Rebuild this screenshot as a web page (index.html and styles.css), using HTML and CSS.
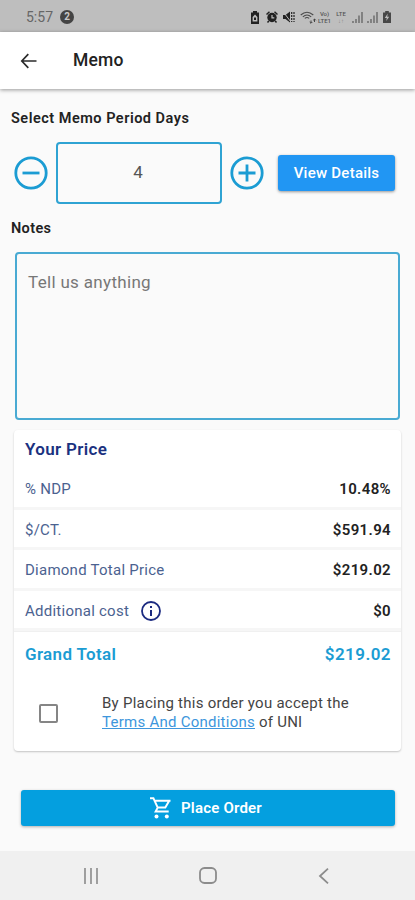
FILE: index.html
```html
<!DOCTYPE html>
<html lang="en">
<head>
    <meta charset="UTF-8">
    <meta name="viewport" content="width=device-width, initial-scale=1.0">
    <title>Memo</title>
    <link rel="stylesheet" href="styles.css">
</head>
<body>
    <div class="status-bar">
        <span class="time">5:57</span>
        <span class="badge">2</span>
        <div class="status-icons">
            <svg class="battery-saver" width="10" height="13" viewBox="0 0 10 13">
                <path d="M3 0h4v1.5h2V13H1V1.5h2z" fill="#222"/>
                <path d="M5 3.5L2.6 6v4.5h4.8V6z" fill="#bebebe"/>
                <path d="M4 6.5h2V9H4z" fill="#222"/>
            </svg>
            <svg class="alarm" width="12" height="12" viewBox="0 0 12 12">
                <circle cx="6" cy="6.5" r="4.7" fill="#222"/>
                <path d="M.5 3.5l3-2.7M11.5 3.5l-3-2.7M2.8 10l-1.3 1.5M9.2 10l1.3 1.5" stroke="#222" stroke-width="1.5"/>
                <path d="M6 4v2.8h2.3" fill="none" stroke="#bebebe" stroke-width="1.2"/>
            </svg>
            <svg class="mute" width="12" height="12" viewBox="0 0 12 12">
                <path d="M0 4h2.5L7 .5v11L2.5 8H0z" fill="#222"/>
                <path d="M.5 1.2L8 11" stroke="#bebebe" stroke-width="1"/>
                <path d="M8.7 1v10M11 1v10" stroke="#222" stroke-width="1.2" stroke-dasharray="2 1"/>
            </svg>
            <svg class="wifi" width="17" height="13" viewBox="0 0 17 13">
                <path d="M.7 4Q7 -1.5 13.3 4M2.8 5.8Q7 2.2 11.2 5.8M4.8 7.4Q7 5.5 9.2 7.4" fill="none" stroke="#4a4a4a" stroke-width="1.1"/>
                <path d="M11 12V9.5M9.7 11L11 12.3 12.3 11M14.5 8v3M13.2 9.3l1.3-1.3 1.3 1.3" fill="none" stroke="#444" stroke-width="1"/>
            </svg>
            <span class="lte"><span>Vo)</span><span>LTE1</span></span>
            <span class="lte lte-2"><span>LTE</span><span class="arrows">↓↑</span></span>
            <svg class="signal" width="27" height="12" viewBox="0 0 27 12">
                <path d="M1 12v-2M4 12V8M7 12V4.5M10 12V1M16 12v-2M19 12V8M22 12V4.5M25 12V1" stroke="#686868" stroke-width="1.4"/>
            </svg>
            <svg class="battery" width="8" height="12" viewBox="0 0 8 12">
                <path d="M2.2 0h3.6v1.5H8V12H0V1.5h2.2z" fill="#484848"/>
                <path d="M4.8 2.5L1.8 7h2L3.2 10 6.2 5.7h-2z" fill="#bebebe"/>
            </svg>
        </div>
    </div>

    <header class="app-bar">
        <svg class="back" width="18" height="16" viewBox="0 0 18 16">
            <path d="M16.5 8H2M8.3 1.2L1.8 8l6.5 6.8" fill="none" stroke="#2b2b2b" stroke-width="1.7"/>
        </svg>
        <h1>Memo</h1>
    </header>

    <main>
        <h2 class="label">Select Memo Period Days</h2>
        <div class="days">
            <button class="round" type="button" aria-label="Less">
                <svg width="34" height="34" viewBox="0 0 34 34">
                    <circle cx="17" cy="17" r="15.2"/>
                    <path d="M8.5 17h17"/>
                </svg>
            </button>
            <input class="days-input" type="text" value="4">
            <button class="round" type="button" aria-label="More">
                <svg width="34" height="34" viewBox="0 0 34 34">
                    <circle cx="17" cy="17" r="15.2"/>
                    <path d="M8.5 17h17M17 8.5v17"/>
                </svg>
            </button>
            <button class="details" type="button">View Details</button>
        </div>

        <h2 class="label notes-label">Notes</h2>
        <textarea class="notes" placeholder="Tell us anything"></textarea>

        <section class="card">
            <h3>Your Price</h3>
            <div class="row first"><span>% NDP</span><b>10.48%</b></div>
            <div class="row"><span>$/CT.</span><b>$591.94</b></div>
            <div class="row"><span>Diamond Total Price</span><b>$219.02</b></div>
            <div class="row">
                <span>Additional cost</span>
                <svg class="info" width="20" height="20" viewBox="0 0 20 20">
                    <circle cx="10" cy="10" r="9" fill="none" stroke="#1b2a80" stroke-width="1.8"/>
                    <path d="M10 9v6M10 5v2" stroke="#1b2a80" stroke-width="2"/>
                </svg>
                <b>$0</b>
            </div>
            <div class="total"><span>Grand Total</span><span class="amount">$219.02</span></div>
            <div class="terms">
                <input class="check" type="checkbox" aria-label="Accept">
                <p>By Placing this order you accept the<br><a href="#">Terms And Conditions</a> of UNI</p>
            </div>
        </section>

        <button class="place-order" type="button">
            <svg width="22" height="22" viewBox="0 0 22 22">
                <path d="M0 1.2h3.4l4.3 9.4h7.6l4.2-7.4M4.2 3.7h16.3M7.7 10.6l-2 3.8h13" fill="none" stroke="#fff" stroke-width="2"/>
                <circle cx="6.5" cy="19.5" r="2" fill="#fff"/>
                <circle cx="16.8" cy="19.5" r="2" fill="#fff"/>
            </svg>
            <span>Place Order</span>
        </button>
    </main>

    <nav class="nav-bar">
        <svg width="18" height="16" viewBox="0 0 18 16">
            <path d="M3 0v16M9 0v16M15 0v16" stroke="#969696" stroke-width="1.8"/>
        </svg>
        <svg width="18" height="17" viewBox="0 0 18 17">
            <rect x="1" y="1" width="16" height="15" rx="4.5" fill="none" stroke="#8c8c8c" stroke-width="1.8"/>
        </svg>
        <svg width="18" height="16" viewBox="0 0 18 16">
            <path d="M13 .7L5 8l8 7.3" fill="none" stroke="#8c8c8c" stroke-width="1.8"/>
        </svg>
    </nav>
</body>
</html>
```
FILE: styles.css
```css
* {
    box-sizing: border-box;
}
body {
    margin: 0;
    height: 900px;
    display: flex;
    flex-direction: column;
    background-color: #fafafa;
    font-family: Roboto, sans-serif;
    color: #222;
    overflow: hidden;
}
h1, h2, h3, p {
    margin: 0;
}
button, input, textarea {
    font-family: inherit;
}
svg {
    display: block;
    flex: none;
}
.status-bar {
    height: 32px;
    flex: none;
    display: flex;
    align-items: center;
    padding: 2px 24px 0 26px;
    background-color: #bebebe;
}
.time {
    width: 28px;
    font-size: 14px;
    color: #666;
}
.badge {
    width: 14px;
    height: 14px;
    margin-left: 6px;
    border-radius: 50%;
    background-color: #444;
    color: #c8c8c8;
    font-size: 10px;
    font-weight: 700;
    line-height: 14px;
    text-align: center;
}
.status-icons {
    display: flex;
    align-items: center;
    margin-left: auto;
}
.alarm {
    margin-left: 6px;
}
.mute {
    margin-left: 5px;
}
.wifi {
    margin-left: 5px;
}
.lte {
    display: flex;
    flex-direction: column;
    align-items: center;
    width: 15px;
    font-size: 6px;
    line-height: 7px;
    font-weight: 500;
    color: #555;
}
.lte-2 {
    width: 12px;
    margin-left: 3px;
}
.arrows {
    color: #8a8a8a;
}
.signal {
    margin-left: 5px;
}
.battery {
    margin-left: 4px;
}
.app-bar {
    height: 57px;
    flex: none;
    display: flex;
    align-items: center;
    padding-left: 20px;
    background-color: #fff;
    box-shadow: 0 1px 4px rgba(0, 0, 0, 0.4);
}
.app-bar h1 {
    margin-left: 35px;
    font-size: 17.5px;
    line-height: 22px;
    padding-bottom: 1px;
    font-weight: 500;
    letter-spacing: 0.2px;
}
main {
    flex: 1;
    display: flex;
    flex-direction: column;
}
.label {
    margin: 20px 0 0 11px;
    font-size: 14.5px;
    line-height: 20px;
    font-weight: 600;
    letter-spacing: 0.5px;
}
.days {
    display: flex;
    align-items: center;
    margin-top: 13px;
    padding-left: 14px;
}
.round {
    padding: 0;
    border: none;
    background: none;
}
.round svg {
    fill: none;
    stroke: #1b9cd3;
    stroke-width: 2.8;
}
.days-input {
    width: 166px;
    height: 62px;
    margin: 0 8px;
    padding: 0 2px 3px 0;
    border: 2px solid #2fa3d3;
    border-radius: 4px;
    background: none;
    font-size: 17px;
    text-align: center;
    color: #555;
}
.details {
    width: 117px;
    height: 36px;
    margin-left: 14px;
    padding: 0;
    border: none;
    border-radius: 3px;
    background-color: #2196f3;
    box-shadow: 0 1px 3px rgba(0, 0, 0, 0.4);
    color: #fff;
    font-size: 15px;
    font-weight: 500;
    letter-spacing: 0.25px;
}
.notes-label {
    margin-top: 15px;
    letter-spacing: 0.35px;
}
.notes {
    width: 385px;
    height: 168px;
    flex: none;
    margin: 13px 0 0 15px;
    padding: 18px 11px;
    border: 2px solid #49aad3;
    border-radius: 4px;
    background: none;
    font-size: 17px;
    line-height: 20px;
    letter-spacing: 0.32px;
    resize: none;
}
.notes::placeholder {
    color: #777;
}
.card {
    height: 321px;
    flex: none;
    margin: 10px 14px 0;
    border-radius: 4px;
    background-color: #fff;
    box-shadow: 0 1px 2px rgba(0, 0, 0, 0.22);
}
.card h3 {
    padding: 8px 11px 0;
    font-size: 17px;
    line-height: 22px;
    font-weight: 600;
    letter-spacing: 0.35px;
    color: #1b3280;
}
.row {
    height: 40.5px;
    display: flex;
    align-items: center;
    padding: 3px 10px 0 11px;
    border-bottom: 3px solid #f6f6f6;
    font-size: 15px;
    letter-spacing: 0.25px;
    color: #4b6290;
}
.row.first {
    margin-top: 9px;
}
.row b {
    margin-left: auto;
    font-weight: 600;
    letter-spacing: 0.35px;
    color: #222;
}
.info {
    margin-left: 12px;
}
.total {
    height: 44px;
    display: flex;
    align-items: center;
    justify-content: space-between;
    padding: 0 10px 0 11px;
    border-top: 1px solid #f0f0f0;
    font-size: 17px;
    font-weight: 600;
    letter-spacing: 0.35px;
    color: #1b9cd3;
}
.amount {
    letter-spacing: 0.45px;
}
.terms {
    display: flex;
    align-items: center;
    margin-top: 19px;
    padding-left: 25px;
}
.check {
    appearance: none;
    width: 19px;
    height: 19px;
    margin: 0;
    border: 2px solid #858585;
    border-radius: 2px;
}
.terms p {
    margin-left: 44px;
    font-size: 15px;
    line-height: 19px;
    letter-spacing: 0.25px;
    color: #444;
}
.terms a {
    color: #3d96dc;
}
.place-order {
    width: 374px;
    height: 36px;
    flex: none;
    display: flex;
    align-items: center;
    justify-content: center;
    gap: 9px;
    margin: 39px 0 0 21px;
    padding: 0 4px 0 0;
    border: none;
    border-radius: 3px;
    background-color: #049fdf;
    box-shadow: 0 1px 3px rgba(0, 0, 0, 0.3);
    color: #fff;
    font-size: 15px;
    font-weight: 600;
    letter-spacing: 0.2px;
}
.nav-bar {
    height: 49px;
    flex: none;
    display: flex;
    align-items: center;
    justify-content: space-between;
    padding: 0 82px;
    background-color: #f0f0f0;
}
```
